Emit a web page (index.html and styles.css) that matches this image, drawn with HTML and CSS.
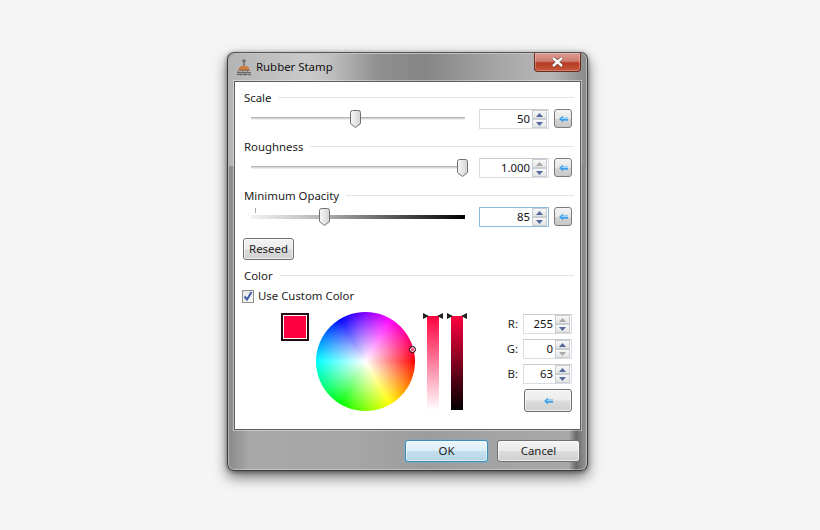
FILE: index.html
```html
<!DOCTYPE html>
<html lang="en">
<head>
<meta charset="utf-8">
<title>Rubber Stamp</title>
<link rel="stylesheet" href="styles.css">
</head>
<body>
<svg class="defs" width="0" height="0" aria-hidden="true">
  <defs>
    <linearGradient id="thumbFill" x1="0" y1="0" x2="1" y2="0">
      <stop offset="0" stop-color="#f8f8f8"/><stop offset="1" stop-color="#d4d4d4"/>
    </linearGradient>
    <symbol id="thumb" viewBox="0 0 11 18">
      <path d="M2.500.5h6a2 2 0 0 1 2 2V13.500L5.500 17.500.5 13.500V2.500a2 2 0 0 1 2-2z" fill="url(#thumbFill)" stroke="#6f6f6f"/>
    </symbol>
    <symbol id="back" viewBox="0 0 9 8">
      <path d="M0 4 4 .5V2.300H9V5.700H4V7.500z" fill="#3f9fe6"/>
      <path d="M4 2.300H9V4H2z" fill="#9ed4f7"/>
    </symbol>
    <symbol id="up" viewBox="0 0 7 4"><path d="M3.500 0 7 4H0z"/></symbol>
    <symbol id="down" viewBox="0 0 7 4"><path d="M0 0h7L3.500 4z"/></symbol>
  </defs>
</svg>
<main class="window">
  <header class="titlebar">
    <svg class="app-icon" viewBox="0 0 16 17" width="16" height="17" aria-hidden="true">
      <circle cx="8" cy="2" r="1.800" fill="#6f6a66"/>
      <rect x="7" y="3" width="2" height="4" fill="#8a8078"/>
      <path d="M3 9.500c0-2 2-2.500 5-2.500s5 .5 5 2.500v1H3z" fill="#cf7c3e"/>
      <rect x="2.500" y="10.500" width="11" height="1.300" fill="#8c5a34"/>
      <path d="M1 13.500q1.200-1 2.300 0t2.300 0 2.300 0 2.300 0 2.300 0 2.300 0M1 15.500q1.200-1 2.300 0t2.300 0 2.300 0 2.300 0 2.300 0 2.300 0" stroke="#333" stroke-width=".9" fill="none"/>
    </svg>
    <h1 class="title">Rubber Stamp</h1>
    <button class="close" aria-label="Close"><svg viewBox="0 0 13 10" width="13" height="10" aria-hidden="true"><path d="M2 1l9 8M11 1l-9 8" stroke="#5a3a38" stroke-width="3.600"/><path d="M2 1l9 8M11 1l-9 8" stroke="#fff" stroke-width="2.400"/></svg></button>
  </header>

  <div class="client">
    <section class="group">
      <div class="heading"><span>Scale</span><i></i></div>
      <div class="row">
        <div class="slider"><div class="track"></div><svg class="thumb" style="left:99px"><use href="#thumb"/></svg></div>
        <div class="num wide"><span class="val">50</span><div class="spin"><b><svg><use href="#up"/></svg></b><b><svg><use href="#down"/></svg></b></div></div>
        <button class="reset"><svg><use href="#back"/></svg></button>
      </div>
    </section>

    <section class="group">
      <div class="heading"><span>Roughness</span><i></i></div>
      <div class="row">
        <div class="slider"><div class="track"></div><svg class="thumb" style="left:206px"><use href="#thumb"/></svg></div>
        <div class="num wide"><span class="val">1.000</span><div class="spin"><b class="off"><svg><use href="#up"/></svg></b><b><svg><use href="#down"/></svg></b></div></div>
        <button class="reset"><svg><use href="#back"/></svg></button>
      </div>
    </section>

    <section class="group">
      <div class="heading"><span>Minimum Opacity</span><i></i></div>
      <div class="row">
        <div class="slider"><div class="tick"></div><div class="track fade"></div><svg class="thumb" style="left:68px"><use href="#thumb"/></svg></div>
        <div class="num wide focus"><span class="val">85</span><div class="spin"><b><svg><use href="#up"/></svg></b><b><svg><use href="#down"/></svg></b></div></div>
        <button class="reset"><svg><use href="#back"/></svg></button>
      </div>
    </section>

    <button class="btn reseed">Reseed</button>

    <section class="group color">
      <div class="heading"><span>Color</span><i></i></div>
      <label class="check">
        <span class="box"><svg viewBox="0 0 12 12" width="12" height="12" aria-hidden="true"><path d="M2.500 6.500 5 9.500 9.500 2" fill="none" stroke="#3f5fa8" stroke-width="2"/></svg></span>
        Use Custom Color
      </label>
      <div class="picker">
        <div class="swatch"></div>
        <div class="wheel"><span class="pin"></span></div>
        <div class="bar sat"><span class="mark l"></span><span class="mark r"></span></div>
        <div class="bar val-bar"><span class="mark l"></span><span class="mark r"></span></div>
        <div class="rgb">
          <div class="rgb-row"><label>R:</label><div class="num"><span class="val">255</span><div class="spin"><b class="off"><svg><use href="#up"/></svg></b><b><svg><use href="#down"/></svg></b></div></div></div>
          <div class="rgb-row"><label>G:</label><div class="num"><span class="val">0</span><div class="spin"><b><svg><use href="#up"/></svg></b><b class="off"><svg><use href="#down"/></svg></b></div></div></div>
          <div class="rgb-row"><label>B:</label><div class="num"><span class="val">63</span><div class="spin"><b><svg><use href="#up"/></svg></b><b><svg><use href="#down"/></svg></b></div></div></div>
          <button class="btn rgb-reset"><svg><use href="#back"/></svg></button>
        </div>
      </div>
    </section>
  </div>

  <footer class="footer">
    <button class="btn action default">OK</button>
    <button class="btn action">Cancel</button>
  </footer>
</main>
</body>
</html>
```
FILE: styles.css
```css
* { box-sizing: border-box; }
html, body { height: 100%; }
body {
  margin: 0;
  padding: 52px 0 0 227px;
  background: #f5f5f5;
  font: 11.4px/16px "Noto Sans", "Open Sans", sans-serif;
  color: #222;
  overflow: hidden;
}
.defs { position: absolute; }

.window {
  width: 361px;
  height: 419px;
  display: flex;
  flex-direction: column;
  padding: 0 6px;
  border: 1px solid #3c3c3c;
  border-top-color: #555;
  border-radius: 7px;
  background:
    linear-gradient(90deg, #8a8a8a 0, #a8a8a8 6%, #a6a6a6 35%, #9c9c9c 55%, #a4a4a4 75%, #a8a8a8 95%, #6a6a6a 97%, #999 100%);
  box-shadow: 0 0 0 1px rgba(255,255,255,.35) inset, 0 6px 14px rgba(0,0,0,.55), 0 1px 4px rgba(0,0,0,.4);
  position: relative;
}
.window::before {
  content: "";
  position: absolute;
  left: 1px; right: 1px; top: 1px; height: 112px;
  border-radius: 6px 6px 0 0;
  background: linear-gradient(90deg, #b4b4b4 0, #cacaca 22%, #c0c0c0 28%, #8f8f8f 42%, #858585 55%, #a5a5a5 75%, #b8b8b8 90%, #8a8a8a 100%);
}
.titlebar {
  position: relative;
  height: 28px;
  flex: none;
  display: flex;
  align-items: flex-start;
  padding: 6px 0 0 2px;
}
.app-icon { flex: none; }
.title {
  margin: -1px 0 0 4px;
  font-size: 11.4px;
  font-weight: 400;
  line-height: 18px;
  color: #111;
}
.close {
  position: absolute;
  top: 0;
  right: 0;
  width: 47px;
  height: 19px;
  padding: 0;
  display: flex;
  align-items: center;
  justify-content: center;
  border: 1px solid #6e2a24;
  border-top: 0;
  border-radius: 0 0 4px 4px;
  background: linear-gradient(#dc9a90 0, #cf7f72 45%, #b83a22 55%, #c4593c 100%);
  box-shadow: inset 0 0 0 1px rgba(255,255,255,.25);
}

.client {
  position: relative;
  flex: none;
  height: 349px;
  padding: 6px 6px 0 8px;
  background: #fff;
  border: 1px solid #5c5c5c;
  box-shadow: 0 0 0 1px rgba(255,255,255,.4);
}
.group { margin-bottom: 8px; }
.heading {
  height: 20px;
  display: flex;
  align-items: center;
  gap: 7px;
  margin-left: 1px;
}
.heading i {
  flex: 1;
  height: 1px;
  margin-top: -2px;
  background: #dfe6ea;
}
.row {
  height: 20px;
  display: flex;
  align-items: flex-start;
  padding-left: 8px;
  margin-top: 1px;
}
.slider {
  position: relative;
  width: 214px;
  height: 20px;
  margin-right: 14px;
  flex: none;
}
.track {
  position: absolute;
  left: 0; right: 0; top: 8px;
  height: 3px;
  background: linear-gradient(#b4b4b4 0 1px, #d8d8d8 1px 2px, #eee 2px);
}
.track.fade {
  top: 8px;
  height: 4px;
  background: linear-gradient(90deg, #f2f2f2 0, #bcbcbc 30%, #6a6a6a 60%, #000 100%);
}
.tick {
  position: absolute;
  left: 4px; top: 1px;
  width: 1px; height: 5px;
  background: #aaa;
}
.thumb {
  position: absolute;
  top: 1px;
  width: 11px;
  height: 18px;
}
.num {
  height: 20px;
  width: 49px;
  display: flex;
  align-items: center;
  justify-content: flex-end;
  flex: none;
  padding-right: 1px;
  border: 1px solid #d7dde2;
  border-top-color: #c6ccd2;
  background: #fff;
}
.num.wide { width: 70px; }
.num.focus { border-color: #8cbbdc; }
.val { margin-right: 2px; color: #111; }
.spin {
  width: 15px;
  height: 18px;
  display: flex;
  flex-direction: column;
  gap: 0;
}
.spin b {
  flex: 1;
  display: flex;
  align-items: center;
  justify-content: center;
  border: 1px solid #c9ced3;
  background: linear-gradient(#f8f8f8, #e4e4e4);
  fill: #54689c;
}
.spin b.off { fill: #a8a8a8; }
.spin svg { width: 7px; height: 4px; }
.reset {
  width: 18px;
  height: 19px;
  margin-left: 5px;
  padding: 0;
  flex: none;
  display: flex;
  align-items: center;
  justify-content: center;
  border: 1px solid #7c7c7c;
  border-radius: 3px;
  background: linear-gradient(#f4f4f4 0, #e6e6e6 50%, #d4d4d4 52%, #c8c8c8 100%);
}
.reset svg { width: 9px; height: 8px; }

.btn {
  padding: 0;
  font: inherit;
  color: #222;
  border: 1px solid #707070;
  border-radius: 3px;
  background: linear-gradient(#f3f3f3 0, #ebebeb 48%, #dcdcdc 52%, #cfcfcf 100%);
  box-shadow: inset 0 0 0 1px rgba(255,255,255,.6);
}
.reseed {
  display: block;
  width: 51px;
  height: 22px;
  margin: 11px 0 0 0;
}
.color { margin: 6px 0 0; }
.check {
  height: 20px;
  margin-top: 0;
  display: flex;
  align-items: center;
  gap: 4px;
}
.box {
  width: 12px;
  height: 13px;
  border: 1px solid #8e8f8f;
  background: linear-gradient(135deg, #e6e6e6, #fbfbfb);
  display: flex;
  align-items: center;
  justify-content: center;
  flex: none;
  margin-left: -1px;
}
.box svg { flex: none; }
.picker {
  display: flex;
  align-items: flex-start;
  margin-top: 7px;
  padding-left: 38px;
}
.swatch {
  width: 28px;
  height: 28px;
  flex: none;
  border: 2px solid #2a0a10;
  background: #ff003f;
  box-shadow: inset 0 0 0 1px #fff;
}
.wheel {
  position: relative;
  width: 99px;
  height: 99px;
  flex: none;
  margin: -1px 0 0 7px;
  border-radius: 50%;
  background:
    radial-gradient(closest-side, #fff 0, rgba(255,255,255,0) 100%),
    conic-gradient(from 90deg, #f00, #ff0, #0f0, #0ff, #00f, #f0f, #f00);
}
.pin {
  position: absolute;
  left: 93px;
  top: 34px;
  width: 7px;
  height: 7px;
  border-radius: 50%;
  border: 1px solid #111;
  background: #f0447a;
  box-shadow: inset 0 0 0 1px #ffd6e2;
}
.bar {
  position: relative;
  width: 12px;
  height: 94px;
  flex: none;
  margin-top: 3px;
}
.sat { margin-left: 12px; background: linear-gradient(#ff003f, #fff); }
.val-bar { margin-left: 12px; background: linear-gradient(#ff003f, #000); }
.mark {
  position: absolute;
  top: -3px;
  width: 0; height: 0;
  border-top: 3px solid transparent;
  border-bottom: 3px solid transparent;
}
.mark.l { left: -4px; border-left: 6px solid #222; }
.mark.r { right: -4px; border-right: 6px solid #222; }
.rgb {
  display: flex;
  flex-direction: column;
  align-items: flex-end;
  gap: 5px;
  margin: 1px 0 0 41px;
  width: 68px;
}
.rgb-row {
  display: flex;
  align-items: center;
  gap: 5px;
}
.rgb-reset {
  width: 48px;
  height: 23px;
  display: flex;
  align-items: center;
  justify-content: center;
}
.rgb-reset svg { width: 9px; height: 8px; }

.footer {
  flex: 1;
  display: flex;
  justify-content: flex-end;
  align-items: flex-start;
  gap: 9px;
  padding: 10px 1px 0 0;
  position: relative;
}
.action { width: 83px; height: 22px; }
.default {
  border-color: #3c90bc;
  background: linear-gradient(#ecf6fb 0, #dcedf6 48%, #c4dfee 52%, #b4d6e8 100%);
  box-shadow: 0 0 2px #5ec0ee, inset 0 0 0 1px rgba(255,255,255,.5);
}
```
